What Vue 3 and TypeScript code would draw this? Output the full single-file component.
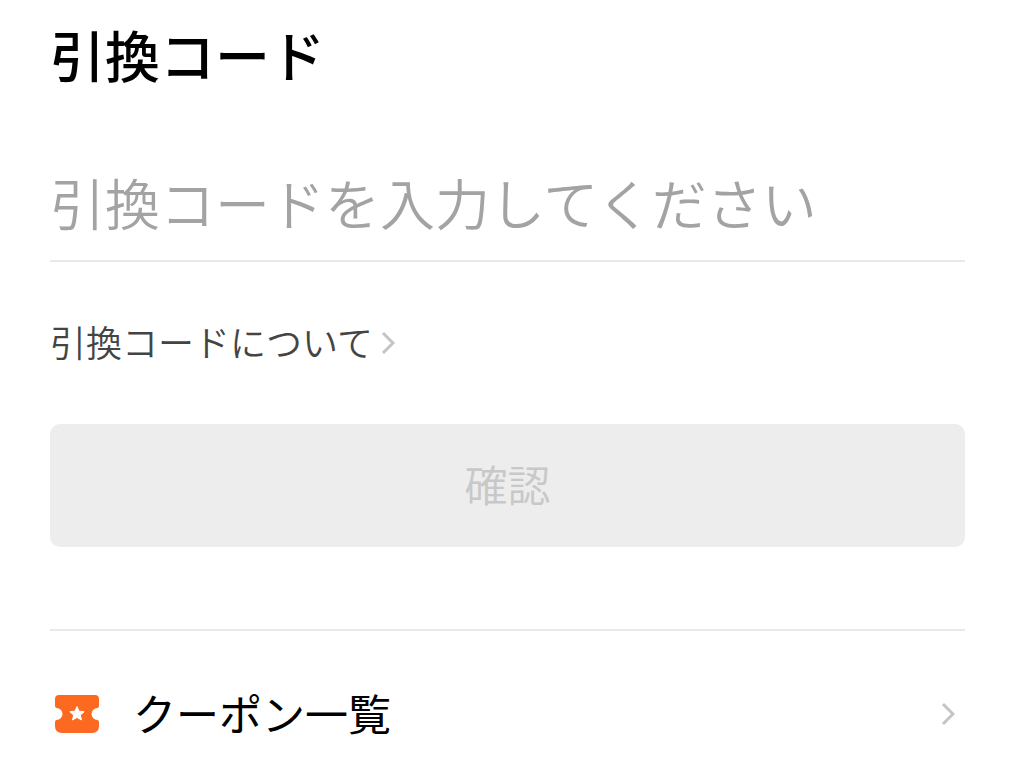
<script setup lang="ts">
import { ref } from 'vue'

const code = ref('')
</script>

<template>
  <main class="page">
    <form @submit.prevent>
      <label class="title" for="code">引換コード</label>
      <input id="code" v-model="code" class="field" type="text" placeholder="引換コードを入力してください" />
      <a class="about" href="#about">
        <span>引換コードについて</span>
        <svg class="chevron" viewBox="0 0 14 24" aria-hidden="true"><path d="M2 2 12 12 2 22" /></svg>
      </a>
      <button class="confirm" type="submit" :disabled="!code">確認</button>
    </form>
    <a class="coupons" href="#coupons">
      <svg class="ticket" viewBox="0 0 46 40" aria-hidden="true">
        <path fill="#fb6a20" d="M5 1H41Q45 1 45 5V12Q45 13.6 43.5 14A6 6 0 0 0 43.5 26Q45 26.4 45 28V32Q45 39 38 39H8Q1 39 1 32V28Q1 26.4 2.5 26A6 6 0 0 0 2.5 14Q1 13.6 1 12V5Q1 1 5 1Z" />
        <path class="star" d="M23 12.5 25 17.2 30.2 17.7 26.3 21.1 27.5 26 23 23.4 18.5 26 19.7 21.1 15.8 17.7 21 17.2Z" />
      </svg>
      <span class="label">クーポン一覧</span>
      <svg class="chevron" viewBox="0 0 14 24" aria-hidden="true"><path d="M2 2 12 12 2 22" /></svg>
    </a>
  </main>
</template>

<style>
body {
  margin: 0;
  background: #fff;
}
</style>

<style scoped>
.page {
  box-sizing: border-box;
  padding: 13px 59px 0 50px;
  font-family: "Noto Sans CJK JP", sans-serif;
  color: #000;
}
form {
  display: flex;
  flex-direction: column;
  align-items: flex-start;
}
.title {
  font-size: 55px;
  line-height: 80px;
  font-weight: 500;
}
.field {
  box-sizing: border-box;
  width: 100%;
  height: 118px;
  margin-top: 51px;
  padding: 0 0 2px;
  border: 0;
  border-bottom: 2px solid #e9e9e9;
  border-radius: 0;
  outline: 0;
  background: transparent;
  color: #000;
  font-family: inherit;
  font-size: 55px;
  font-weight: 350;
}
.field::placeholder {
  color: #a3a3a3;
  opacity: 1;
}
.about {
  display: flex;
  align-items: center;
  gap: 8px;
  margin-top: 52px;
  color: #444;
  font-size: 36px;
  font-weight: 350;
  line-height: 54px;
  text-decoration: none;
}
.chevron {
  flex: none;
  width: 14px;
  height: 24px;
  margin-top: 4px;
  fill: none;
  stroke: #c4c4c4;
  stroke-width: 3;
}
.confirm {
  width: 100%;
  height: 123px;
  margin-top: 56px;
  padding: 0 0 6px;
  border: 0;
  border-radius: 10px;
  background: #ededed;
  color: #c8c8c8;
  font-family: inherit;
  font-size: 43px;
  font-weight: 350;
}
.coupons {
  display: flex;
  align-items: center;
  margin-top: 82px;
  padding: 48px 10px 0 4px;
  border-top: 2px solid #e9e9e9;
  color: #000;
  font-size: 43px;
  line-height: 66px;
  text-decoration: none;
}
.ticket {
  flex: none;
  width: 46px;
  height: 40px;
  margin-top: 4px;
}
.star {
  fill: #fff;
  stroke: #fff;
  stroke-width: 1;
  stroke-linejoin: round;
}
.label {
  flex: 1;
  margin-left: 33px;
}
</style>
